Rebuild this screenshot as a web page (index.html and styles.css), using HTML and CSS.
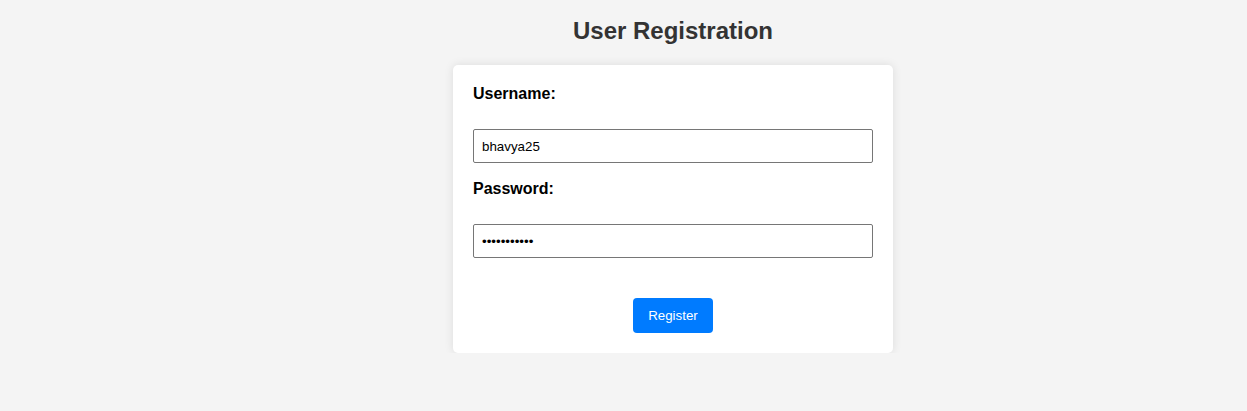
FILE: index.html
```html
<!DOCTYPE html>
<html lang="en">
<head>
<meta charset="utf-8">
<title>User Registration</title>
<link rel="stylesheet" href="styles.css">
</head>
<body>
  <h2 class="title">User Registration</h2>
  <form class="card">
    <label class="field-label" for="username">Username:</label>
    <input class="field-input" type="text" id="username" value="bhavya25">
    <label class="field-label" for="password">Password:</label>
    <input class="field-input" type="password" id="password" value="bhavya25abc">
    <div class="actions">
      <button class="btn" type="button">Register</button>
    </div>
  </form>
</body>
</html>
```

FILE: styles.css
```css
html, body {
  margin: 0;
  background: #f4f4f4;
}
body {
  font-family: "Liberation Sans", Arial, sans-serif;
  padding-left: 99px;
}
.title {
  text-align: center;
  color: #333;
  font-size: 24px;
  font-weight: bold;
  margin: 17px 0 20px;
}
.card {
  width: 400px;
  margin: 0 auto;
  padding: 20px;
  background: #fff;
  border-radius: 5px;
  box-shadow: 0 0 10px rgba(0, 0, 0, 0.1);
  display: flex;
  flex-direction: column;
}
.field-label {
  display: block;
  font-size: 16px;
  font-weight: bold;
  color: #000;
  line-height: 18px;
  margin-bottom: 26px;
}
.field-input {
  box-sizing: border-box;
  width: 100%;
  height: 34px;
  padding: 8px;
  margin: 0 0 17px;
  border: 1px solid #767676;
  border-radius: 2px;
  font-family: "Liberation Sans", Arial, sans-serif;
  font-size: 13.333px;
  color: #000;
  background: #fff;
}
.actions {
  display: flex;
  justify-content: center;
  padding-top: 23px;
}
.btn {
  background: #007bff;
  color: #fff;
  border: none;
  border-radius: 4px;
  padding: 10px 15px;
  height: 35px;
  font-family: "Liberation Sans", Arial, sans-serif;
  font-size: 13.333px;
  cursor: pointer;
}
```
